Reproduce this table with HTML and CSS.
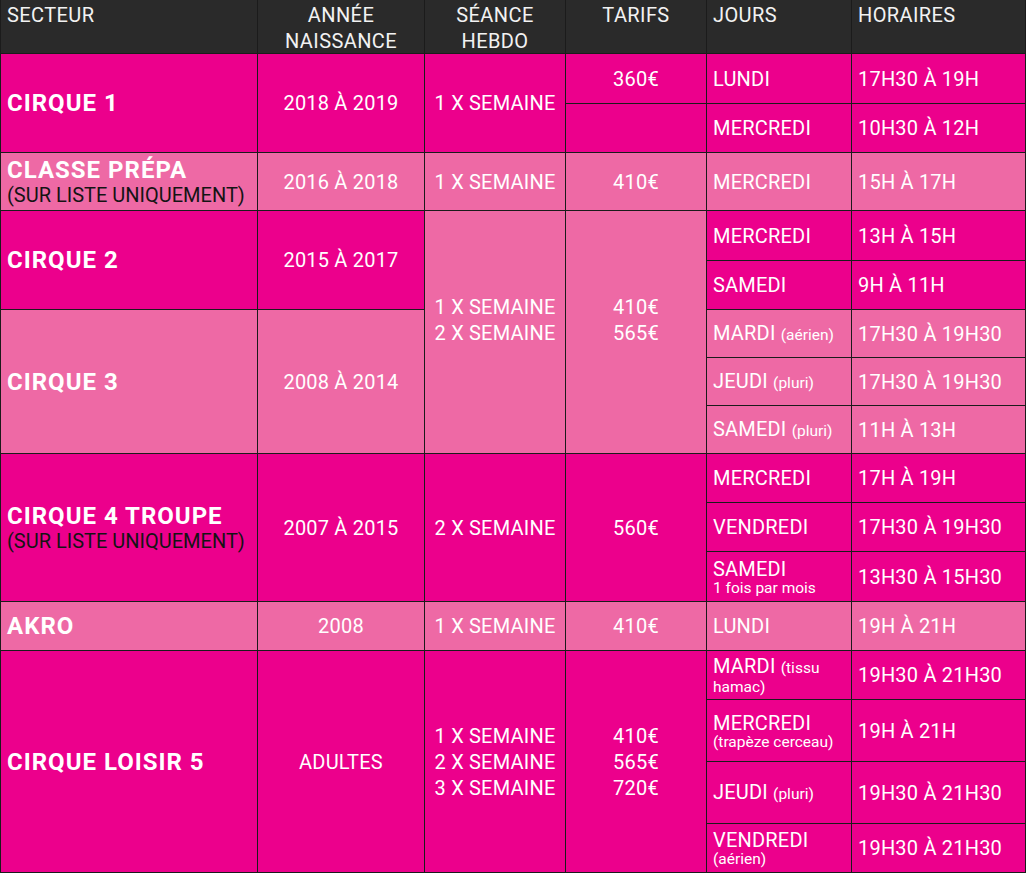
FILE: index.html
```html
<!DOCTYPE html>
<html lang="fr">
<head>
<meta charset="utf-8">
<title>Horaires et tarifs</title>
<link rel="stylesheet" href="styles.css">
</head>
<body>
<div class="table">
  <div class="c head">SECTEUR</div>
  <div class="c head mid">ANNÉE<br>NAISSANCE</div>
  <div class="c head mid">SÉANCE<br>HEBDO</div>
  <div class="c head mid">TARIFS</div>
  <div class="c head">JOURS</div>
  <div class="c head">HORAIRES</div>

  <div class="c hot sect span2"><b>CIRQUE 1</b></div>
  <div class="c hot mid span2">2018 À 2019</div>
  <div class="c hot mid span2">1 X SEMAINE</div>
  <div class="c hot mid">360€</div>
  <div class="c hot">LUNDI</div>
  <div class="c hot">17H30 À 19H</div>
  <div class="c hot mid"></div>
  <div class="c hot">MERCREDI</div>
  <div class="c hot">10H30 À 12H</div>

  <div class="c soft sect"><b>CLASSE PRÉPA</b><span class="note">(SUR LISTE UNIQUEMENT)</span></div>
  <div class="c soft mid">2016 À 2018</div>
  <div class="c soft mid">1 X SEMAINE</div>
  <div class="c soft mid">410€</div>
  <div class="c soft">MERCREDI</div>
  <div class="c soft">15H À 17H</div>

  <div class="c hot sect span2"><b>CIRQUE 2</b></div>
  <div class="c hot mid span2">2015 À 2017</div>
  <div class="c soft mid span5 lift">1 X SEMAINE<br>2 X SEMAINE</div>
  <div class="c soft mid span5 lift">410€<br>565€</div>
  <div class="c hot">MERCREDI</div>
  <div class="c hot">13H À 15H</div>
  <div class="c hot">SAMEDI</div>
  <div class="c hot">9H À 11H</div>

  <div class="c soft sect span3"><b>CIRQUE 3</b></div>
  <div class="c soft mid span3">2008 À 2014</div>
  <div class="c soft">
    <span>MARDI <small>(aérien)</small></span>
  </div>
  <div class="c soft">17H30 À 19H30</div>
  <div class="c soft">
    <span>JEUDI <small>(pluri)</small></span>
  </div>
  <div class="c soft">17H30 À 19H30</div>
  <div class="c soft">
    <span>SAMEDI <small>(pluri)</small></span>
  </div>
  <div class="c soft">11H À 13H</div>

  <div class="c hot sect span3"><b>CIRQUE 4 TROUPE</b><span class="note">(SUR LISTE UNIQUEMENT)</span></div>
  <div class="c hot mid span3">2007 À 2015</div>
  <div class="c hot mid span3">2 X SEMAINE</div>
  <div class="c hot mid span3">560€</div>
  <div class="c hot">MERCREDI</div>
  <div class="c hot">17H À 19H</div>
  <div class="c hot">VENDREDI</div>
  <div class="c hot">17H30 À 19H30</div>
  <div class="c hot two">
    <span>SAMEDI</span>
    <small class="sub">1 fois par mois</small>
  </div>
  <div class="c hot">13H30 À 15H30</div>

  <div class="c soft sect"><b>AKRO</b></div>
  <div class="c soft mid">2008</div>
  <div class="c soft mid">1 X SEMAINE</div>
  <div class="c soft mid">410€</div>
  <div class="c soft">LUNDI</div>
  <div class="c soft">19H À 21H</div>

  <div class="c hot sect span4"><b>CIRQUE LOISIR 5</b></div>
  <div class="c hot mid span4">ADULTES</div>
  <div class="c hot mid span4">1 X SEMAINE<br>2 X SEMAINE<br>3 X SEMAINE</div>
  <div class="c hot mid span4">410€<br>565€<br>720€</div>
  <div class="c hot two">
    <span>MARDI <small>(tissu</small></span>
    <small class="sub">hamac)</small>
  </div>
  <div class="c hot">19H30 À 21H30</div>
  <div class="c hot two">
    <span>MERCREDI</span>
    <small class="sub">(trapèze cerceau)</small>
  </div>
  <div class="c hot">19H À 21H</div>
  <div class="c hot">
    <span>JEUDI <small>(pluri)</small></span>
  </div>
  <div class="c hot">19H30 À 21H30</div>
  <div class="c hot two">
    <span>VENDREDI</span>
    <small class="sub">(aérien)</small>
  </div>
  <div class="c hot">19H30 À 21H30</div>
</div>
</body>
</html>
```
FILE: styles.css
```css
html, body {
  margin: 0;
  padding: 0;
  background: #1b1b1b;
}

.table {
  width: 1026px;
  height: 873px;
  box-sizing: border-box;
  padding: 0 1px 1px 1px;
  display: grid;
  grid-template-columns: 256px 166px 140px 140px 144px 173px;
  grid-template-rows: 53px 49px 48px 57px 49px 48px 47px 47px 47px 48px 48px 49px 48px 48px 61px 61px 48px;
  gap: 1px;
  background: #1b1b1b;
  font-family: Roboto, "Liberation Sans", sans-serif;
  font-size: 20px;
  line-height: 26px;
  letter-spacing: 0.2px;
  color: #fff;
}

.c {
  display: flex;
  flex-direction: column;
  justify-content: center;
  padding: 0 6px;
  overflow: hidden;
  white-space: nowrap;
}

.head {
  background: #2a2a2a;
  justify-content: flex-start;
  padding-top: 2px;
  color: #f2f2f2;
  letter-spacing: 0.4px;
}

.hot { background: #ec008c; }
.soft { background: #ee69a5; }

.mid {
  align-items: center;
  text-align: center;
}

.span2 { grid-row: span 2; }
.span3 { grid-row: span 3; }
.span4 { grid-row: span 4; }
.span5 { grid-row: span 5; }

.lift { padding-bottom: 24px; }

.sect b {
  font-weight: 700;
  font-size: 24px;
  line-height: 26px;
  letter-spacing: 1px;
}

.note {
  color: #141414;
  font-size: 20px;
  line-height: 24px;
  letter-spacing: 0;
}

small {
  font-size: 15.5px;
  letter-spacing: 0;
}

.two { line-height: 20px; padding-top: 2px; }

.sub {
  display: block;
  line-height: 18px;
}
```
